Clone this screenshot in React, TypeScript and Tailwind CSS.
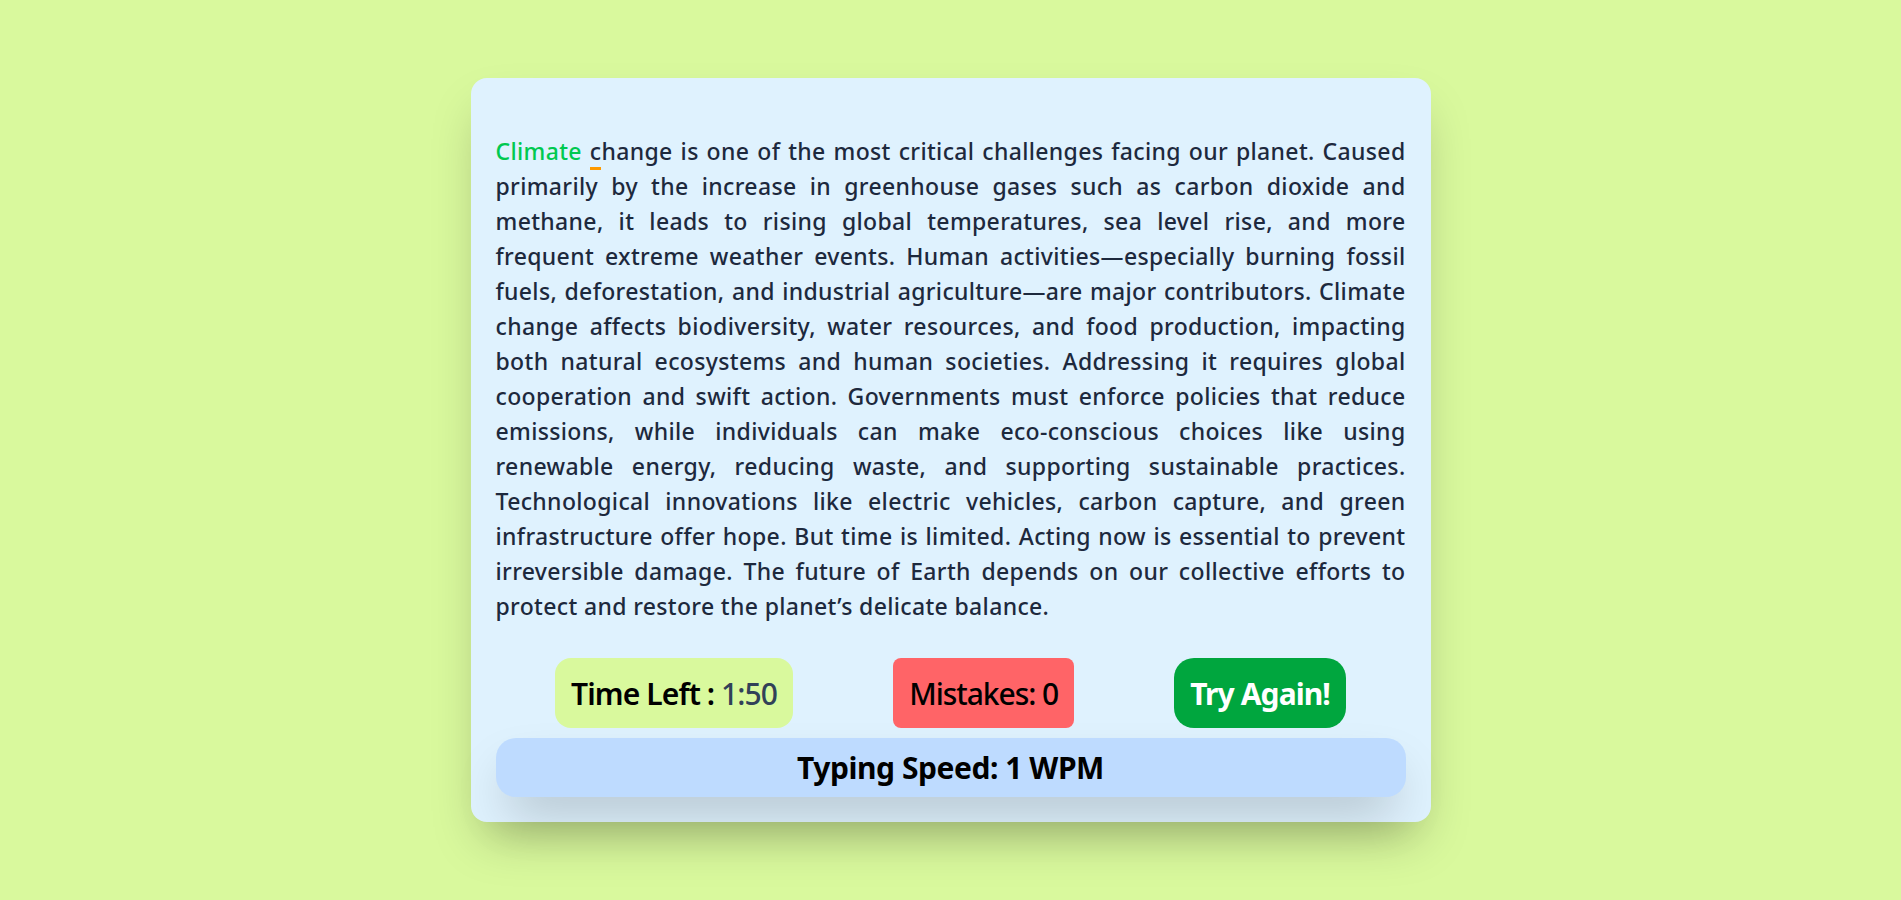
import React from "react";

const lines: string[] = [
  "primarily by the increase in greenhouse gases such as carbon dioxide and",
  "methane, it leads to rising global temperatures, sea level rise, and more",
  "frequent extreme weather events. Human activities\u2014especially burning fossil",
  "fuels, deforestation, and industrial agriculture\u2014are major contributors. Climate",
  "change affects biodiversity, water resources, and food production, impacting",
  "both natural ecosystems and human societies. Addressing it requires global",
  "cooperation and swift action. Governments must enforce policies that reduce",
  "emissions, while individuals can make eco-conscious choices like using",
  "renewable energy, reducing waste, and supporting sustainable practices.",
  "Technological innovations like electric vehicles, carbon capture, and green",
  "infrastructure offer hope. But time is limited. Acting now is essential to prevent",
  "irreversible damage. The future of Earth depends on our collective efforts to",
];

export default function App() {
  return (
    <div
      className="min-h-screen w-full bg-[#d9f99d] flex items-center justify-center"
      style={{ fontFamily: '"Noto Sans", "Open Sans", sans-serif' }}
    >
      <div className="w-[960px] bg-[#dff2fe] rounded-2xl shadow-2xl px-[25px] pt-[56px] pb-[25px]">
        <div className="text-[23px] leading-[35px] font-medium text-[#1d293d] tracking-[0.015em]">
          <div className="whitespace-nowrap text-justify [text-align-last:justify]">
            <span className="text-[#00c950]">Climate</span>{" "}
            <span className="border-b-[3px] border-[#fe9a00]">c</span>
            hange is one of the most critical challenges facing our planet. Caused
          </div>
          {lines.map((l, i) => (
            <div key={i} className="whitespace-nowrap text-justify [text-align-last:justify]">
              {l}
            </div>
          ))}
          <div className="whitespace-nowrap">protect and restore the planet’s delicate balance.</div>
        </div>

        <div className="mt-[34px] flex justify-center gap-[100px]">
          <div className="h-[70px] px-4 flex items-center rounded-2xl bg-[#d9f99d] text-[30px] font-semibold text-black tracking-[-0.03em]">
            Time Left :&nbsp;<span className="font-medium text-[#314158]">1:50</span>
          </div>
          <div className="h-[70px] px-4 flex items-center rounded-lg bg-[#ff6467] text-[30px] font-medium text-black tracking-[-0.035em]">
            Mistakes: 0
          </div>
          <button className="h-[70px] px-4 flex items-center rounded-[20px] bg-[#00a63e] text-[30px] font-bold text-white tracking-[-0.03em]">
            Try Again!
          </button>
        </div>

        <div className="mt-[10px] h-[59px] rounded-[20px] bg-[#bedbff] shadow-2xl flex items-center justify-center text-[30px] font-bold text-black tracking-[-0.015em]">
          Typing Speed: 1 WPM
        </div>
      </div>
    </div>
  );
}
